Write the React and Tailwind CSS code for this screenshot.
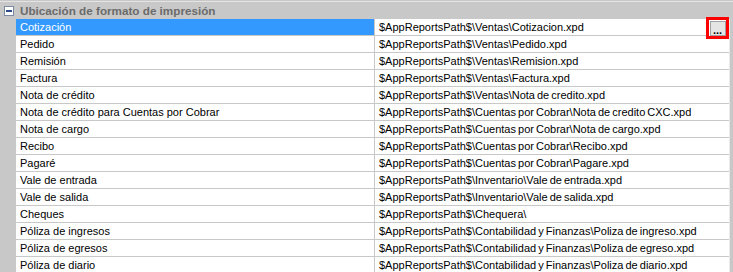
import React from 'react'

const rows = [
  ['Cotización', '$AppReportsPath$\\Ventas\\Cotizacion.xpd'],
  ['Pedido', '$AppReportsPath$\\Ventas\\Pedido.xpd'],
  ['Remisión', '$AppReportsPath$\\Ventas\\Remision.xpd'],
  ['Factura', '$AppReportsPath$\\Ventas\\Factura.xpd'],
  ['Nota de crédito', '$AppReportsPath$\\Ventas\\Nota de credito.xpd'],
  ['Nota de crédito para Cuentas por Cobrar', '$AppReportsPath$\\Cuentas por Cobrar\\Nota de credito CXC.xpd'],
  ['Nota de cargo', '$AppReportsPath$\\Cuentas por Cobrar\\Nota de cargo.xpd'],
  ['Recibo', '$AppReportsPath$\\Cuentas por Cobrar\\Recibo.xpd'],
  ['Pagaré', '$AppReportsPath$\\Cuentas por Cobrar\\Pagare.xpd'],
  ['Vale de entrada', '$AppReportsPath$\\Inventario\\Vale de entrada.xpd'],
  ['Vale de salida', '$AppReportsPath$\\Inventario\\Vale de salida.xpd'],
  ['Cheques', '$AppReportsPath$\\Chequera\\'],
  ['Póliza de ingresos', '$AppReportsPath$\\Contabilidad y Finanzas\\Poliza de ingreso.xpd'],
  ['Póliza de egresos', '$AppReportsPath$\\Contabilidad y Finanzas\\Poliza de egreso.xpd'],
  ['Póliza de diario', '$AppReportsPath$\\Contabilidad y Finanzas\\Poliza de diario.xpd'],
]

// ─── One property row ────────────────────────────────────────────────────────
function Row({ label, value, selected }) {
  return (
    <div className="flex h-[17px] border-b border-[#c8c8c8]">
      <div
        className={`w-[359px] shrink-0 pl-[4px] leading-[16px] border-r border-[#c8c8c8] truncate ${
          selected ? 'bg-[#3399ff] text-white' : 'bg-white text-black'
        }`}
      >
        {label}
      </div>
      <div className="flex-1 bg-white pl-[4px] leading-[16px] text-black whitespace-nowrap overflow-hidden [word-spacing:-1px]">
        {value}
      </div>
    </div>
  )
}

export default function App() {
  return (
    <div
      className="w-[733px] h-[272px] bg-[#c8c8c8] overflow-hidden text-[11px]"
      style={{ fontFamily: '"Liberation Sans", Arial, sans-serif' }}
    >
      <div className="h-px bg-[#e4e4e4] mt-px" />
      {/* Group header */}
      <div className="flex items-center h-[17px]">
        <div className="ml-[4px] w-[10px] h-[10px] bg-white border border-[#7a8aa5] flex items-center justify-center">
          <div className="w-[6px] h-[2px] bg-[#2a4b8c]" />
        </div>
        <span className="ml-[6px] font-bold text-[#6b6b6b] text-[11.7px]">Ubicación de formato de impresión</span>
      </div>

      <div className="flex">
        <div className="w-[16px] shrink-0" />
        <div className="w-[713px] shrink-0 relative">
          {rows.map(([label, value], i) => (
            <Row key={label} label={label} value={value} selected={i === 0} />
          ))}
          {/* highlighted ellipsis button */}
          <div className="absolute left-[690px] top-[-2px] w-[23px] h-[22px] border-[3px] border-[#ff0000] bg-white flex items-center justify-center">
            <div className="w-[16px] h-[15px] bg-[#e4e4e4] border border-[#a0a0a0] flex items-end justify-center text-[11px] leading-[10px] font-bold text-black">
              ...
            </div>
          </div>
        </div>
        <div className="flex-1 border-l border-[#e8e8e8]" />
      </div>
    </div>
  )
}
